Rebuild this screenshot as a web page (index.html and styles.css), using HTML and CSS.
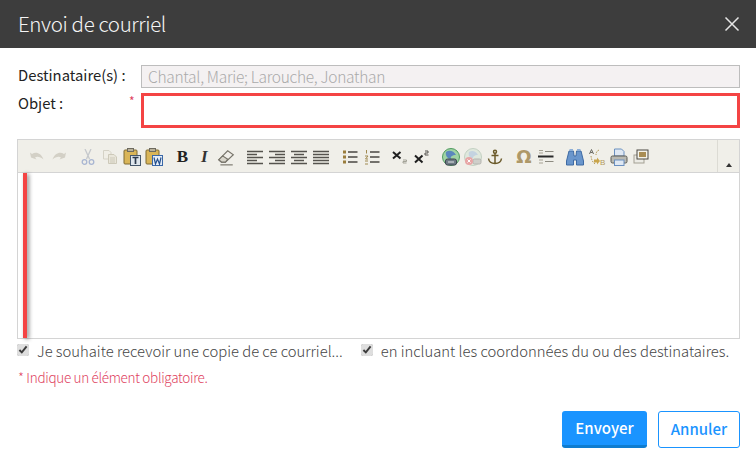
FILE: index.html
```html
<!DOCTYPE html>
<html lang="fr">
<head>
<meta charset="utf-8">
<title>Envoi de courriel</title>
<link rel="stylesheet" href="styles.css">
</head>
<body>
<div class="dialog">
  <header class="head">
    <h1 class="title">Envoi de courriel</h1>
    <svg class="close" width="16" height="16" viewBox="0 0 16 16"><path d="M1.5 1.5L14.5 14.5M14.5 1.5L1.5 14.5" stroke="#e6e6e6" stroke-width="1.5" fill="none"/></svg>
  </header>
  <main class="body">
    <div class="row row-to">
      <label class="lab">Destinataire(s) :</label>
      <div class="field field-to">Chantal, Marie; Larouche, Jonathan</div>
    </div>
    <div class="row row-subject">
      <label class="lab">Objet :</label>
      <span class="req">*</span>
      <div class="field field-subject"></div>
    </div>
    <div class="editor">
      <div class="toolbar">
        <div class="tools">
          <div class="grp">
            <svg class="ic" viewBox="0 0 16 16"><path d="M2 8.500L1 3.500 3 5C7 2.500 12 4 14.500 10.500 11.500 8 8.500 7 6 8.500L7.500 10.500Z" fill="#d3d0c6" /></svg>
            <svg class="ic" viewBox="0 0 16 16"><path d="M14 8.500L15 3.500 13 5C9 2.500 4 4 1.500 10.500 4.500 8 7.500 7 10 8.500L8.500 10.500Z" fill="#d3d0c6"/></svg>
          </div>
          <div class="grp">
            <svg class="ic" viewBox="0 0 16 16"><g fill="none" stroke="#a9b6d2" stroke-width="1.300"><path d="M5 0L9.500 10M11 0L6.500 10" stroke="#c5c8cc"/><circle cx="4.500" cy="13" r="2.300"/><circle cx="11.500" cy="13" r="2.300"/></g></svg>
            <svg class="ic" viewBox="0 0 16 16"><path d="M1.500 1.500H7L9 3.500V10H1.500Z" fill="#f0eee6" stroke="#d5d2c6"/><path d="M6.500 5.500H12L14.500 8V14.500H6.500Z" fill="#e9e6da" stroke="#cdc9b9"/><path d="M8 9H13M8 11H13M8 13H13" stroke="#cdc9b9"/></svg>
            <svg class="ic ic-big" viewBox="0 0 18 18"><rect x="1" y="2" width="13" height="14" rx="1" fill="#d9b558" stroke="#7f6a33"/><rect x="4.500" y="0.500" width="6" height="3" fill="#b9b19a" stroke="#6d6a5e"/><rect x="7.500" y="7.500" width="10" height="10" fill="#dfe6ec" stroke="#46586c"/><path d="M9.500 9.500H15.500M12.500 9.500V16" stroke="#2c3a4c" stroke-width="1.700"/></svg>
            <svg class="ic ic-big" viewBox="0 0 18 18"><rect x="1" y="2" width="13" height="14" rx="1" fill="#d9b558" stroke="#7f6a33"/><rect x="4.500" y="0.500" width="6" height="3" fill="#b9b19a" stroke="#6d6a5e"/><rect x="7.500" y="7.500" width="10" height="10" fill="#e6edf6" stroke="#3a68a8"/><path d="M9 9.500L10.500 16 12.500 11 14.500 16 16 9.500" stroke="#24508e" stroke-width="1.200" fill="none"/></svg>
          </div>
          <div class="grp">
            <span class="ic glyph bold">B</span>
            <span class="ic glyph ital">I</span>
            <svg class="ic ic-big" viewBox="0 0 16 16"><path d="M1.500 10.500L9.500 2.500 14.500 6 7.500 12.500H4Z" fill="#f1efe9" stroke="#77746a"/><path d="M1.500 10.500L5 7 9.500 10 7.500 12.500H4Z" fill="#d8d5ca" stroke="#77746a"/><path d="M3 15H14" stroke="#77746a"/></svg>
          </div>
          <div class="grp">
            <svg class="ic" viewBox="0 0 16 16"><path d="M0 2.500H16M0 5.500H10M0 8.500H16M0 11.500H10M0 14.500H16" stroke="#55534e" stroke-width="1.400"/></svg>
            <svg class="ic" viewBox="0 0 16 16"><path d="M0 2.500H16M6 5.500H16M0 8.500H16M6 11.500H16M0 14.500H16" stroke="#55534e" stroke-width="1.400"/></svg>
            <svg class="ic" viewBox="0 0 16 16"><path d="M0 2.500H16M3 5.500H13M0 8.500H16M3 11.500H13M0 14.500H16" stroke="#55534e" stroke-width="1.400"/></svg>
            <svg class="ic" viewBox="0 0 16 16"><path d="M0 2.500H16M0 5.500H16M0 8.500H16M0 11.500H16M0 14.500H16" stroke="#55534e" stroke-width="1.400"/></svg>
          </div>
          <div class="grp">
            <svg class="ic" viewBox="0 0 16 16"><path d="M1 1.500h3v3h-3zM1 6.500h3v3h-3zM1 11.500h3v3h-3z" fill="#9a7d3c"/><path d="M6 3H15.500M6 8H15.500M6 13H15.500" stroke="#4a4843" stroke-width="1.300"/></svg>
            <svg class="ic" viewBox="0 0 16 16"><path d="M2.500 1V4.500M1 7H4L1.500 10H4M1 12H4M1 15H4" stroke="#a08a50" fill="none"/><path d="M6 3H15.500M6 8H15.500M6 13H15.500" stroke="#4a4843" stroke-width="1.300"/></svg>
          </div>
          <div class="grp">
            <svg class="ic" viewBox="0 0 16 16"><path d="M1 3L8.500 9.500M8.500 3L1 9.500" stroke="#1f1f1f" stroke-width="2"/><path d="M11 11H14.500V12.500H11V14H14.500" stroke="#9b9b8f" stroke-width=".9" fill="none"/></svg>
            <svg class="ic" viewBox="0 0 16 16"><path d="M1 6.500L8.500 13.500M8.500 6.500L1 13.500" stroke="#1f1f1f" stroke-width="2"/><path d="M11 2H14V4H11V6H14.500" stroke="#55534e" stroke-width="1" fill="none"/></svg>
          </div>
          <div class="grp">
            <svg class="ic ic-big" viewBox="0 0 18 18"><circle cx="9" cy="9" r="8.500" fill="#9fd3a4" stroke="#4f9a5f"/><path d="M4 4C7 1.500 12 3 14 7 10 7 8 9 9 11 6 11 3 8 4 4Z" fill="#5a87bd"/><rect x="3.500" y="11" width="11" height="6" rx="2" fill="#6f7b85" stroke="#3f4850"/><path d="M6 14H12" stroke="#e3e6e8"/></svg>
            <svg class="ic ic-big" viewBox="0 0 18 18"><circle cx="9" cy="9" r="8.500" fill="#dfe8dd" stroke="#c3d0c2"/><path d="M5 4C8 2 12 3 14 7 10 7 9 9 9 10 6 10 4 8 5 4Z" fill="#c4d3e0"/><rect x="9" y="11" width="8" height="5" rx="1.500" fill="#cfcfca" stroke="#b5b5b0"/><circle cx="5" cy="13" r="4" fill="#e8a6a6"/><path d="M3.500 11.500L6.500 14.500M6.500 11.500L3.500 14.500" stroke="#fff"/></svg>
            <svg class="ic" viewBox="0 0 16 16"><g fill="none" stroke="#6b5a2a" stroke-width="1.500"><circle cx="8" cy="2.700" r="1.500"/><path d="M8 4V14.500M4.500 6.500H11.500M1.500 9.500C2 13 5 14.500 8 14.500 11 14.500 14 13 14.500 9.500"/></g></svg>
          </div>
          <div class="grp">
            <span class="ic glyph omega">Ω</span>
            <svg class="ic" viewBox="0 0 16 16"><path d="M1 1.500H5M1 4H5M1 11H5M1 14H5" stroke="#a5a294" stroke-width="1.200"/><path d="M7 2.500H15.500M7 12.500H15.500" stroke="#8c8a80" stroke-width="1.200"/><path d="M0 7.500H15.500" stroke="#2a2a2a" stroke-width="2"/></svg>
          </div>
          <div class="grp">
            <svg class="ic ic-big" viewBox="0 0 18 18"><path d="M3 3H7.500L8 8H10L10.500 3H15L17.500 13V17H10.500V12H7.500V17H.5V13Z" fill="#6a96cc" stroke="#3e6aa3"/><path d="M3.500 1H7V3H3.500ZM11 1H14.500V3H11Z" fill="#8fb0d8"/></svg>
            <svg class="ic ic-big" viewBox="0 0 18 18"><path d="M1.500 6L3.500 1.500 5.500 6M2.300 4.500H4.700" stroke="#6b6a62" fill="none"/><path d="M3 8C3.500 13 6 16 8 16M11 2C8.500 3 8 5 8 7" stroke="#b39a5c" stroke-dasharray="1.500 1" fill="none"/><path d="M6 11.500H9V9.500L12 13 9 16.500V14.500H6Z" fill="#c9a54c"/><text class="rep" x="12" y="17">B</text></svg>
            <svg class="ic ic-big" viewBox="0 0 18 18"><path d="M4.500 1H11.500L14 3.500V8H4.500Z" fill="#dfe8f3" stroke="#6b90c0"/><rect x="1" y="8" width="16" height="7" rx="1.500" fill="#b9b9b2" stroke="#5c5c56"/><rect x="4.500" y="12" width="9.500" height="5.500" fill="#dfe8f3" stroke="#6b90c0"/></svg>
            <svg class="ic" viewBox="0 0 16 16"><rect x="1" y="6" width="10" height="8" fill="#ecebe5" stroke="#a3a093"/><rect x="4" y="1" width="11" height="9" fill="#f5f3ea" stroke="#4a4843"/><rect x="6" y="3" width="7" height="5" fill="#a98d54"/></svg>
          </div>
        </div>
        <div class="collapse"><span class="arrow"></span></div>
      </div>
      <div class="edit"><div class="mark"></div></div>
    </div>
    <div class="checks">
      <label class="chk chk-a"><input type="checkbox" checked><span>Je souhaite recevoir une copie de ce courriel...</span></label>
      <label class="chk"><input type="checkbox" checked><span>en incluant les coordonnées du ou des destinataires.</span></label>
    </div>
    <p class="note">* Indique un élément obligatoire.</p>
    <div class="actions">
      <button class="btn primary" type="button">Envoyer</button>
      <button class="btn second" type="button">Annuler</button>
    </div>
  </main>
</div>
</body>
</html>
```

FILE: styles.css
```css
* { box-sizing: border-box; }
html, body { margin: 0; padding: 0; background: #fff; }
body { width: 756px; height: 465px; overflow: hidden; font-family: "Noto Sans CJK SC", "Noto Sans", sans-serif; }
.head { height: 48px; background: #3d3d3d; display: flex; align-items: center; justify-content: space-between; padding: 0 16px 0 18px; }
.title { margin: 0; font-size: 20.500px; font-weight: 300; letter-spacing: -.38px; color: #f5f5f5; line-height: 46px; align-self: flex-start; }
.close { display: block; }
.body { padding: 17px 16px 0 17px; }
.row { display: flex; }
.row-to { height: 23px; }
.row-subject { margin-top: 5px; height: 35px; }
.lab { width: 112px; padding-left: 1px; font-size: 14.800px; line-height: 19px; color: #222; }
.req { width: 12px; color: #e0435f; font-size: 12px; line-height: 16px; }
.field { flex: 1; }
.row-to .field { margin-left: 12px; }
.field-to { border: 1px solid #bdbdbd; background: #f4f1f2; color: #aaa; font-size: 15.500px; font-weight: 300; letter-spacing: -.29px; line-height: 21px; padding-left: 6px; }
.field-subject { border: 3px solid #f44444; background: #fff; }
.editor { margin-top: 11px; width: 723px; border: 1px solid #d4d4d4; height: 200px; display: flex; flex-direction: column; }
.toolbar { height: 33px; flex: none; background: #f0efe9; border-bottom: 1px solid #d4d4d4; display: flex; }
.tools { flex: 1; display: flex; padding: 9px 0 0 11px; gap: 6.700px; }
.grp { display: flex; }
.ic { width: 16px; height: 16px; margin-right: 6px; display: block; flex: none; }
.ic-big { width: 18px; height: 18px; margin: -1px 5px 0 -1px; }
.glyph { text-align: center; line-height: 16px; }
.bold { font-family: "Liberation Serif", serif; font-weight: 700; font-size: 17px; color: #222; }
.ital { font-family: "Liberation Serif", serif; font-weight: 700; font-style: italic; font-size: 17px; color: #333; }
.omega { font-family: "DejaVu Sans", sans-serif; font-weight: 700; font-size: 18px; color: #ae9868; }
.rep { font-family: "Liberation Sans", sans-serif; font-size: 8px; fill: #b39a5c; }
.collapse { width: 22px; border-left: 1px solid #dcdbd4; display: flex; align-items: flex-end; justify-content: center; padding-bottom: 5px; }
.arrow { width: 0; height: 0; border-left: 3.500px solid transparent; border-right: 3.500px solid transparent; border-bottom: 4px solid #333; }
.edit { flex: 1; background: #fff; padding-left: 5px; }
.mark { width: 4px; height: 100%; background: #f44444; box-shadow: 2px 1px 4px rgba(0, 0, 0, .45); }
.checks { display: flex; margin-top: 1px; height: 20px; }
.chk { display: flex; align-items: center; font-size: 14.800px; font-weight: 300; color: #444; }
.chk-a { margin-right: 18px; }
.chk input { margin: 0 8px 0 0; width: 12px; height: 12px; accent-color: #dedede; }
.note { margin: 8px 0 0 1px; font-size: 13.500px; font-weight: 300; letter-spacing: -.31px; line-height: 18px; color: #e0435f; }
.actions { display: flex; justify-content: flex-end; gap: 11px; margin-top: 25px; width: 723px; }
.btn { height: 37px; font-family: inherit; font-size: 15px; font-weight: 500; line-height: 34px; padding: 0 0 2px; border-radius: 3px; }
.primary { width: 85px; background: #1a94ff; color: #fff; border: 0; border-bottom: 3px solid #0f7ccf; }
.second { width: 82px; background: #fff; color: #1a94ff; border: 1px solid #1a94ff; }
```
